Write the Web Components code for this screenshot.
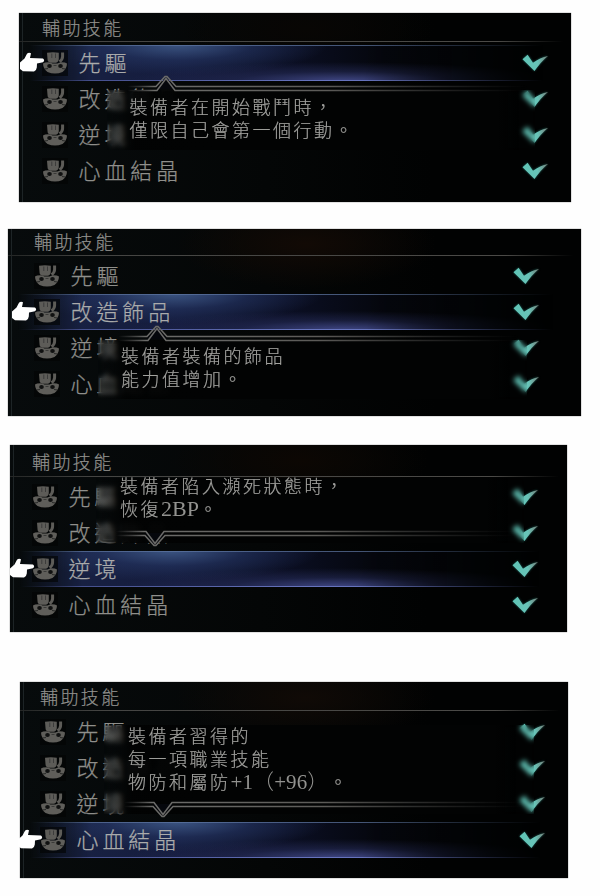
<!DOCTYPE html>
<html lang="zh-Hant">
<head>
<meta charset="utf-8">
<title>輔助技能</title>
<style>
html,body{margin:0;background:#fefefe}
body{width:600px;height:896px;overflow:hidden;display:flex;flex-direction:column;align-items:flex-start;font-family:"Liberation Serif","Noto Sans CJK TC",sans-serif}
</style>
</head>
<body>
<skill-panel heading="輔助技能" style="--w:552px;--h:189px;--mt:13px;--ml:19px;--head:31.5px;--line:28px;--pad:2px;--left:23px;--right:22px;--glow:#080604">
  <skill-row active>先驅</skill-row><skill-row>改造飾品</skill-row><skill-row>逆境</skill-row><skill-row>心血結晶</skill-row>
  <skill-tip slot="tip" style="--x:88px;--y:72px;--w:428px;--h:65px;--px:22.5px;--py:6.5px">裝備者在開始戰鬥時，<br>僅限自己會第一個行動。</skill-tip>
</skill-panel>
<skill-panel heading="輔助技能" style="--w:573px;--h:187px;--mt:27px;--ml:8px;--head:29px;--line:25.5px;--pad:0px;--left:26px;--right:41px;--glow:#120a05">
  <skill-row>先驅</skill-row><skill-row active>改造飾品</skill-row><skill-row>逆境</skill-row><skill-row>心血結晶</skill-row>
  <skill-tip slot="tip" style="--x:90px;--y:106px;--w:429px;--h:64px;--px:23px;--py:6px">裝備者裝備的飾品<br>能力值增加。</skill-tip>
</skill-panel>
<skill-panel heading="輔助技能" style="--w:557px;--h:187px;--mt:29px;--ml:10px;--head:34px;--line:31px;--pad:4px;--left:22px;--right:28px;--glow:#0c0703">
  <skill-row>先驅</skill-row><skill-row>改造飾品</skill-row><skill-row active>逆境</skill-row><skill-row>心血結晶</skill-row>
  <skill-tip slot="tip" below style="--x:86px;--y:33px;--w:428px;--h:57px;--px:24px;--py:-7px">裝備者陷入瀕死狀態時，<br>恢復<span class="n" style="font-size:22px;letter-spacing:0">2BP</span>。</skill-tip>
</skill-panel>
<skill-panel heading="輔助技能" style="--w:548px;--h:196px;--mt:50px;--ml:20px;--head:32px;--line:28px;--pad:2px;--left:20px;--right:22px;--glow:#100a06">
  <skill-row>先驅</skill-row><skill-row>改造飾品</skill-row><skill-row>逆境</skill-row><skill-row active>心血結晶</skill-row>
  <skill-tip slot="tip" below style="--x:84px;--y:43px;--w:430px;--h:81px;--px:24px;--py:-4.5px">裝備者習得的<br>每一項職業技能<br>物防和屬防<span class="n" style="font-size:21px;letter-spacing:.1px;margin-right:11px">+1（+96）</span>。</skill-tip>
</skill-panel>

<script>
const define = (name, html) => {
  const t = document.createElement('template');
  t.innerHTML = html;
  customElements.define(name, class extends HTMLElement {
    constructor() {
      super();
      this.attachShadow({mode: 'open'}).append(t.content.cloneNode(true));
    }
    connectedCallback() {
      const h = this.shadowRoot.querySelector('[data-heading]');
      if (h) h.textContent = this.getAttribute('heading');
    }
  });
};

define('skill-icon', `<style>:host{display:block;width:26px;height:26px;background:#030404aa}svg{display:block;filter:blur(.4px)}</style>
<svg width="26" height="26" viewBox="0 0 26 26">
  <path d="M5 2.800Q11 1.800 16.800 2.800L16.800 9Q16.500 12.300 14 12.800H8.500Q5.500 12.300 5.500 9Z" fill="#5d5c58"/>
  <path d="M9.800 3.500V8M13.500 3.500V8" stroke="#333433" stroke-width=".8"/>
  <path d="M20.600 2.500V6.500Q20.400 9.800 17.600 11.800" fill="none" stroke="#5d5c58" stroke-width="3"/>
  <path d="M1 13.500Q2.500 12.300 6.500 12.300Q9 12.500 10.500 13.500H15.500Q17 12.500 19.500 12.300Q23.500 12.300 25 13.500Q24.800 19 20.500 22Q13 25.200 5.500 22Q1.200 19 1 13.500Z" fill="#5f5e5a"/>
  <ellipse cx="7.500" cy="16" rx="2.300" ry="2" fill="#101111"/><ellipse cx="18.500" cy="16" rx="2.300" ry="2" fill="#101111"/>
  <path d="M2.500 19L6 18.500M23.500 19L20 18.500" stroke="#2a2b2a" stroke-width="1.200"/>
  <path d="M11.500 15.500H14.500" stroke="#3a3a38" stroke-width="1"/>
</svg>`);

define('check-mark', `<style>:host{display:block;width:27px;height:18px}svg{display:block;filter:drop-shadow(0 0 1px #1d5e58)}</style>
<svg width="27" height="18" viewBox="0 0 27 18">
  <defs><linearGradient id="g" x1="0" x2="1"><stop offset="0" stop-color="#5fc4b6"/><stop offset=".6" stop-color="#68c4b8"/><stop offset="1" stop-color="#777b75"/></linearGradient></defs>
  <path d="M.500 5.200L5.600.8L11 8.700Q18 3.500 26 1.900Q19 7.500 12.500 17Z" fill="url(#g)"/>
</svg>`);

define('hand-cursor', `<style>:host{display:block;width:26px;height:21px}svg{display:block}</style>
<svg width="26" height="21" viewBox="0 0 26 21">
  <path d="M0 10.500L4.500 6.500L7 1.800Q8.500.2 11 1.200L10 6L23 6.400Q25.300 8.200 23 10.300L17 11.400L16.800 15.500Q16.500 18.500 14 19.500L3 19.200L0 17Z" fill="#fff"/>
</svg>`);

define('skill-row', `<style>
:host{position:relative;display:flex;align-items:center;height:36px;box-sizing:border-box;padding:0 var(--right) 0 var(--left);color:#8f8f8b;-webkit-text-stroke:.25px currentColor;font:22px/36px "Noto Sans CJK TC",sans-serif;font-weight:300}
:host([active]){color:#aaabab}
.bar{display:none;position:absolute;inset:0 28px 0 10px;
 background:linear-gradient(#5f77a2,#5f77a266) top/100% 1px no-repeat,linear-gradient(90deg,#3c4680,#6673bd 55%) bottom/100% 1px no-repeat,
 radial-gradient(ellipse 150px 30px at 29% 0,#3a5380,#26386688 50%,transparent 100%),
 radial-gradient(ellipse 215px 19px at 61% 100%,#3f4683,#272d5a88 50%,transparent 100%),
 linear-gradient(90deg,#1a2446,#141b3c 30%,#0b0f24 50%,#05070e 68%,#030507);
 -webkit-mask:linear-gradient(90deg,transparent,#000 12%,#000 65%,transparent);mask:linear-gradient(90deg,transparent,#000 12%,#000 65%,transparent)}
hand-cursor{display:none;position:absolute;left:calc(var(--left) - 22.5px);top:7px}
:host([active]) .bar,:host([active]) hand-cursor{display:block}
skill-icon,check-mark,.label{position:relative;flex:none}
.label{margin:-3.500px 0 0 10.500px;letter-spacing:3.900px;flex:1}
</style><div class="bar"></div><skill-icon></skill-icon><hand-cursor></hand-cursor><div class="label"><slot></slot></div><check-mark></check-mark>`);

define('skill-tip', `<style>
:host{position:absolute;left:var(--x);top:var(--y);width:var(--w);height:var(--h);color:#a2a29f;-webkit-text-stroke:.2px currentColor;font:18px/23px "Noto Sans CJK TC",sans-serif;font-weight:300;letter-spacing:2.500px;white-space:nowrap}
::slotted(.n){font-family:"Liberation Serif","Noto Sans CJK TC",serif;line-height:20px;color:#92928f;-webkit-text-stroke:0}
.veil{position:absolute;inset:5px 0 0;backdrop-filter:blur(2.400px);background:linear-gradient(90deg,transparent,#02030340 14px,#02030370 19px,#020303e8 27px,#020303f2 60px,#020303 110px,#020303 390px,transparent 412px)}
:host([below]) .veil{inset:0 0 -8px}
.text{position:relative;padding:max(0px,calc(var(--py) + 3px)) 0 0 var(--px);margin-top:min(0px,calc(var(--py) + 3px))}
svg{position:absolute;left:20px;top:-11.500px;overflow:visible}
:host([below]) svg{top:auto;bottom:-12.500px}
.down{display:none}
:host([below]) .down{display:block}:host([below]) .up{display:none}
</style><div class="veil"></div>
<svg width="400" height="18" viewBox="0 0 400 18" fill="none">
 <defs><linearGradient id="l" gradientUnits="userSpaceOnUse" x1="0" x2="400" y1="0" y2="0"><stop offset="0" stop-color="#666" stop-opacity="0"/><stop offset=".07" stop-color="#6c6c6a"/><stop offset=".5" stop-color="#5c5b58"/><stop offset="1" stop-color="#444" stop-opacity="0"/></linearGradient></defs>
 <g class="up"><path d="M29 15L39 3L49 15Z" fill="#05070c"/><path d="M0 12.500H29L38 2.500H40L49 12.500H400M0 16.500H30L39 4.500L48 16.500H400" stroke="url(#l)" stroke-width="1.500"/></g>
 <g class="down"><path d="M29 3L39 16L49 3Z" fill="#05070c"/><path d="M0 1.500H30L39 13.500L48 1.500H400M0 5.500H29L38 15.500H40L49 5.500H400" stroke="url(#l)" stroke-width="1.500"/></g>
</svg><div class="text"><slot></slot></div>`);

define('skill-panel', `<style>
:host{display:block;position:relative;box-sizing:border-box;flex:none;width:var(--w);height:var(--h);margin:var(--mt) 0 0 var(--ml);background:radial-gradient(ellipse 130px 45px at 52% 8%,var(--glow),transparent),linear-gradient(90deg,#070b0c,#040606 45%,#010202 75%);box-shadow:0 0 1px #555}
:host::before{content:"";position:absolute;left:3px;top:0;bottom:0;width:1px;background:#1d2426}
header{height:var(--head);box-sizing:border-box;padding:var(--pad) 0 0 var(--left);font:18px/25px "Noto Sans CJK TC",sans-serif;font-weight:300;-webkit-text-stroke:.2px currentColor;letter-spacing:2.400px;color:#92928f}
.rule{position:absolute;top:var(--line);left:0;right:8px;height:1px;background:linear-gradient(90deg,#242625,#454543 15%,#4b4a47 88%,transparent)}
</style><header data-heading></header><div class="rule"></div><section><slot></slot></section><slot name="tip"></slot>`);
</script>
</body>
</html>
